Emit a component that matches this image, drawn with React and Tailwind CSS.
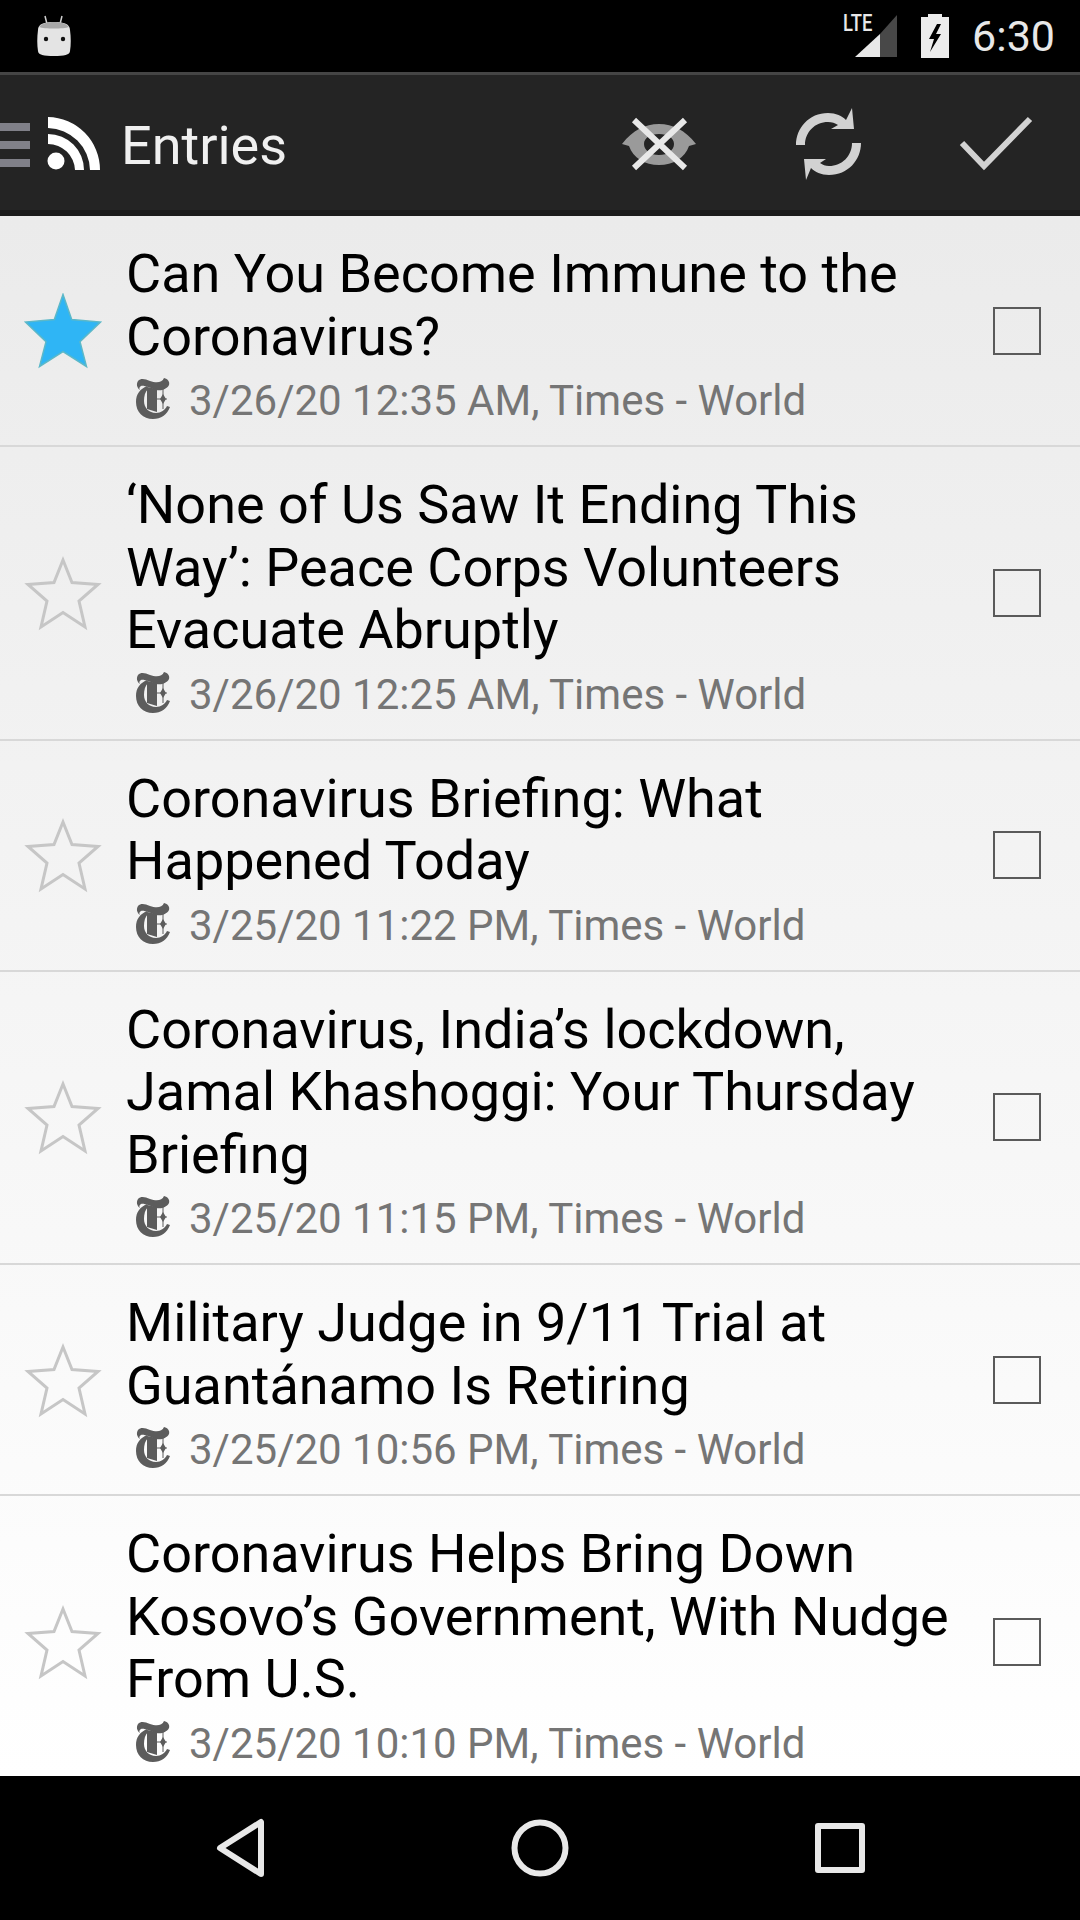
import React from 'react';

const entries = [
  { title: ['Can You Become Immune to the', 'Coronavirus?'], date: '3/26/20 12:35 AM, Times - World', starred: true },
  { title: ['‘None of Us Saw It Ending This', 'Way’: Peace Corps Volunteers', 'Evacuate Abruptly'], date: '3/26/20 12:25 AM, Times - World' },
  { title: ['Coronavirus Briefing: What', 'Happened Today'], date: '3/25/20 11:22 PM, Times - World' },
  { title: ['Coronavirus, India’s lockdown,', 'Jamal Khashoggi: Your Thursday', 'Briefing'], date: '3/25/20 11:15 PM, Times - World' },
  { title: ['Military Judge in 9/11 Trial at', 'Guantánamo Is Retiring'], date: '3/25/20 10:56 PM, Times - World' },
  { title: ['Coronavirus Helps Bring Down', 'Kosovo’s Government, With Nudge', 'From U.S.'], date: '3/25/20 10:10 PM, Times - World' },
];

const StarIcon = ({ filled }) => (
  <svg width="80" height="76" viewBox="0 0 80 76" className="shrink-0">
    <path
      d={filled
        ? 'M40 1.5 L48.7 26.5 L77.5 29 L57 48.7 L63.5 73.5 L40 58.7 L16.5 73.5 L23 48.7 L2.5 29 L31.3 26.5 Z'
        : 'M40 5 L49 27.5 L75 29.5 L56 46 L62 72 L40 57.5 L18 72 L24 46 L5 29.5 L31 27.5 Z'}
      fill={filled ? '#2fb5f5' : 'none'}
      stroke={filled ? '#5cb8c8' : '#c6c6c6'}
      strokeWidth={filled ? 1.5 : 3}
      strokeLinejoin="miter"
    />
  </svg>
);

const TimesLogo = () => (
  <svg width="36" height="42" viewBox="0 0 36 42" className="shrink-0">
    <g fill="#5c5c5c">
      <path d="M12 8 C5 11 1 16 1 24 C1 34 8 41 18 41 C26 41 32 37 35 29 L32 28 C30 32 26 35 21 35 C14 35 9 30 9 23 C9 18 10 14 13 11 Z" />
      <path d="M3 3 C6 0 10 1 15 3 C21 5 27 5 29 0 C33 1 35 4 34 7 C32 11 27 13 21 12 C15 10 9 7 6 8 C4 9 4 11 5 12 C2 10 1 6 3 3 Z" />
      <path d="M12 9 L22 11 L22 34 L12 31 Z" />
      <path d="M28 16 L31 21 L28 26 L25 21 Z" />
      <rect x="22" y="20.5" width="10" height="1" />
      <rect x="27.5" y="11" width="1" height="20" />
    </g>
  </svg>
);

const RssIcon = () => (
  <svg width="54" height="54" viewBox="0 0 54 54" className="shrink-0">
    <circle cx="9" cy="44" r="8.5" fill="#fff" />
    <path d="M1 17 A36 36 0 0 1 37 53 L28 53 A27 27 0 0 0 1 27 Z" fill="#fff" />
    <path d="M1 0 A53 53 0 0 1 53 53 L43 53 A43 43 0 0 0 1 11 Z" fill="#fff" />
  </svg>
);

const EyeOffIcon = () => (
  <svg width="76" height="54" viewBox="0 0 76 54" className="shrink-0">
    <path
      fillRule="evenodd"
      d="M1 27 C12 13 24 7 38 7 C52 7 64 13 75 27 L68 29 C64 41 52 48 38 48 C24 48 12 41 8 29 Z M38 17 C29 17 23 21 23 27 C23 33 29 38 38 38 C47 38 53 33 53 27 C53 21 47 17 38 17 Z"
      fill="#9a9a9a"
    />
    <path d="M13 3 L64 51 M64 3 L13 51" stroke="#e8e8e8" strokeWidth="6" />
  </svg>
);

const SyncIcon = () => (
  <svg width="68" height="72" viewBox="0 0 68 72" fill="#d2d2d2" className="shrink-0">
    <path d="M1 37 C1 20 14 5 33 5 C41 5 47 8 51 12 L57 0 L59 21 L36 21 L43 17 C40 15 37 14 33 14 C20 14 10 24 10 37 Z" />
    <path d="M66 35 C66 52 53 67 34 67 C26 67 20 64 16 60 L11 72 L9 51 L31 51 L25 55 C28 57 30 58 34 58 C47 58 57 48 57 35 Z" />
  </svg>
);

const CheckIcon = () => (
  <svg width="74" height="56" viewBox="0 0 74 56" className="shrink-0">
    <path d="M3 27 L25 50 L71 3" fill="none" stroke="#d2d2d2" strokeWidth="6" />
  </svg>
);

const AndroidIcon = () => (
  <svg width="36" height="42" viewBox="0 0 36 42" className="shrink-0">
    <path d="M9 1 L11 9 M26 1 L24 9" stroke="#d0d0d0" strokeWidth="1.5" />
    <path d="M2 15 C2 9 8 7 18 7 C28 7 34 9 34 15 C35 22 35 30 34 36 C34 40 28 41 18 41 C8 41 2 40 2 36 C1 30 1 22 2 15 Z" fill="#e4e4e4" />
    <path d="M3 12 C6 8 12 7 18 7 C24 7 30 8 33 12 C28 14 8 14 3 12 Z" fill="#a8a8a8" />
    <circle cx="10" cy="24" r="2.2" fill="#111" />
    <circle cx="27" cy="24" r="2.2" fill="#111" />
  </svg>
);

const App = () => {
  return (
    <div className="w-[1080px] h-[1920px] flex flex-col bg-black overflow-hidden font-['Roboto',sans-serif]">
      {/* status bar */}
      <div className="h-[72px] shrink-0 flex items-center bg-black pl-[36px] pr-[25px]">
        <AndroidIcon />
        <div className="flex-1" />
        <div className="relative w-[54px] h-[42px]">
          <svg width="54" height="42" viewBox="0 0 54 42" className="absolute left-0 top-0">
            <path d="M0 42 L25 19 L25 42 Z" fill="#e8e8e8" />
            <path d="M25 19 L42 0 L42 42 L25 42 Z" fill="#484848" />
          </svg>
          <span className="absolute left-[-12px] top-[-3px] text-[23px] leading-[24px] font-medium text-[#e8e8e8] scale-x-[0.8] origin-left">LTE</span>
        </div>
        <svg width="30" height="44" viewBox="0 0 30 44" className="ml-[11px] mr-[22px]">
          <path d="M8 0 H22 V3 H29 V44 H1 V3 H8 Z M17 10 L9 25 H14 L10 38 L21 20 H16 L21 10 Z" fillRule="evenodd" fill="#ececec" />
        </svg>
        <span className="text-[43px] leading-none text-[#e8e8e8]">6:30</span>
      </div>

      {/* toolbar */}
      <div className="h-[144px] shrink-0 flex items-center bg-[#242424] border-t-[3px] border-t-[#454545] border-b-[6px] border-b-[#1a1a1a] pt-[3px]">
        <div className="w-[30px] flex flex-col gap-[10px] mt-[2px]">
          <div className="h-[8px] bg-[#808088]" />
          <div className="h-[8px] bg-[#808088]" />
          <div className="h-[8px] bg-[#808088]" />
        </div>
        <div className="ml-[17px]"><RssIcon /></div>
        <span className="ml-[20px] mt-[4px] text-[54px] leading-none text-[#f0f0f0]">Entries</span>
        <div className="flex-1" />
        <EyeOffIcon />
        <div className="ml-[98px]"><SyncIcon /></div>
        <div className="ml-[96px] mr-[47px]"><CheckIcon /></div>
      </div>

      {/* list */}
      <div className="flex-1 min-h-0 overflow-hidden bg-gradient-to-b from-[#ebebeb] to-white">
        {entries.map((entry) => (
          <div
            key={entry.date}
            className="flex items-center border-b-[2px] border-b-[#d8d8d8] last:border-b-0 pl-[23px] pr-[39px]"
          >
            <StarIcon filled={entry.starred} />
            <div className="ml-[23px] flex-1 min-w-0 pt-[27px] pb-[22px]">
              <div className="text-[54px] leading-[62.5px] text-black">
                {entry.title.map((line) => (
                  <div key={line} className="whitespace-nowrap">{line}</div>
                ))}
              </div>
              <div className="flex items-center pl-[9px] h-[48px] mt-[7px]">
                <TimesLogo />
                <span className="ml-[18px] mt-[4px] text-[42px] leading-none text-[#757575] whitespace-nowrap">{entry.date}</span>
              </div>
            </div>
            <div className="w-[48px] h-[48px] shrink-0 border-[2px] border-[#5a5a5a]" />
          </div>
        ))}
      </div>

      {/* nav bar */}
      <div className="h-[144px] shrink-0 bg-black flex items-center">
        <svg width="56" height="62" viewBox="0 0 56 62" className="ml-[213px]">
          <path d="M48 5 L48 57 L7 31 Z" fill="none" stroke="#e8e8e8" strokeWidth="6" strokeLinejoin="round" />
        </svg>
        <svg width="60" height="60" viewBox="0 0 60 60" className="ml-[241px]">
          <circle cx="30" cy="30" r="25.5" fill="none" stroke="#e8e8e8" strokeWidth="6" />
        </svg>
        <div className="ml-[245px] w-[50px] h-[50px] border-[6px] border-[#e8e8e8] rounded-[3px]" />
      </div>
    </div>
  );
};

export default App;
